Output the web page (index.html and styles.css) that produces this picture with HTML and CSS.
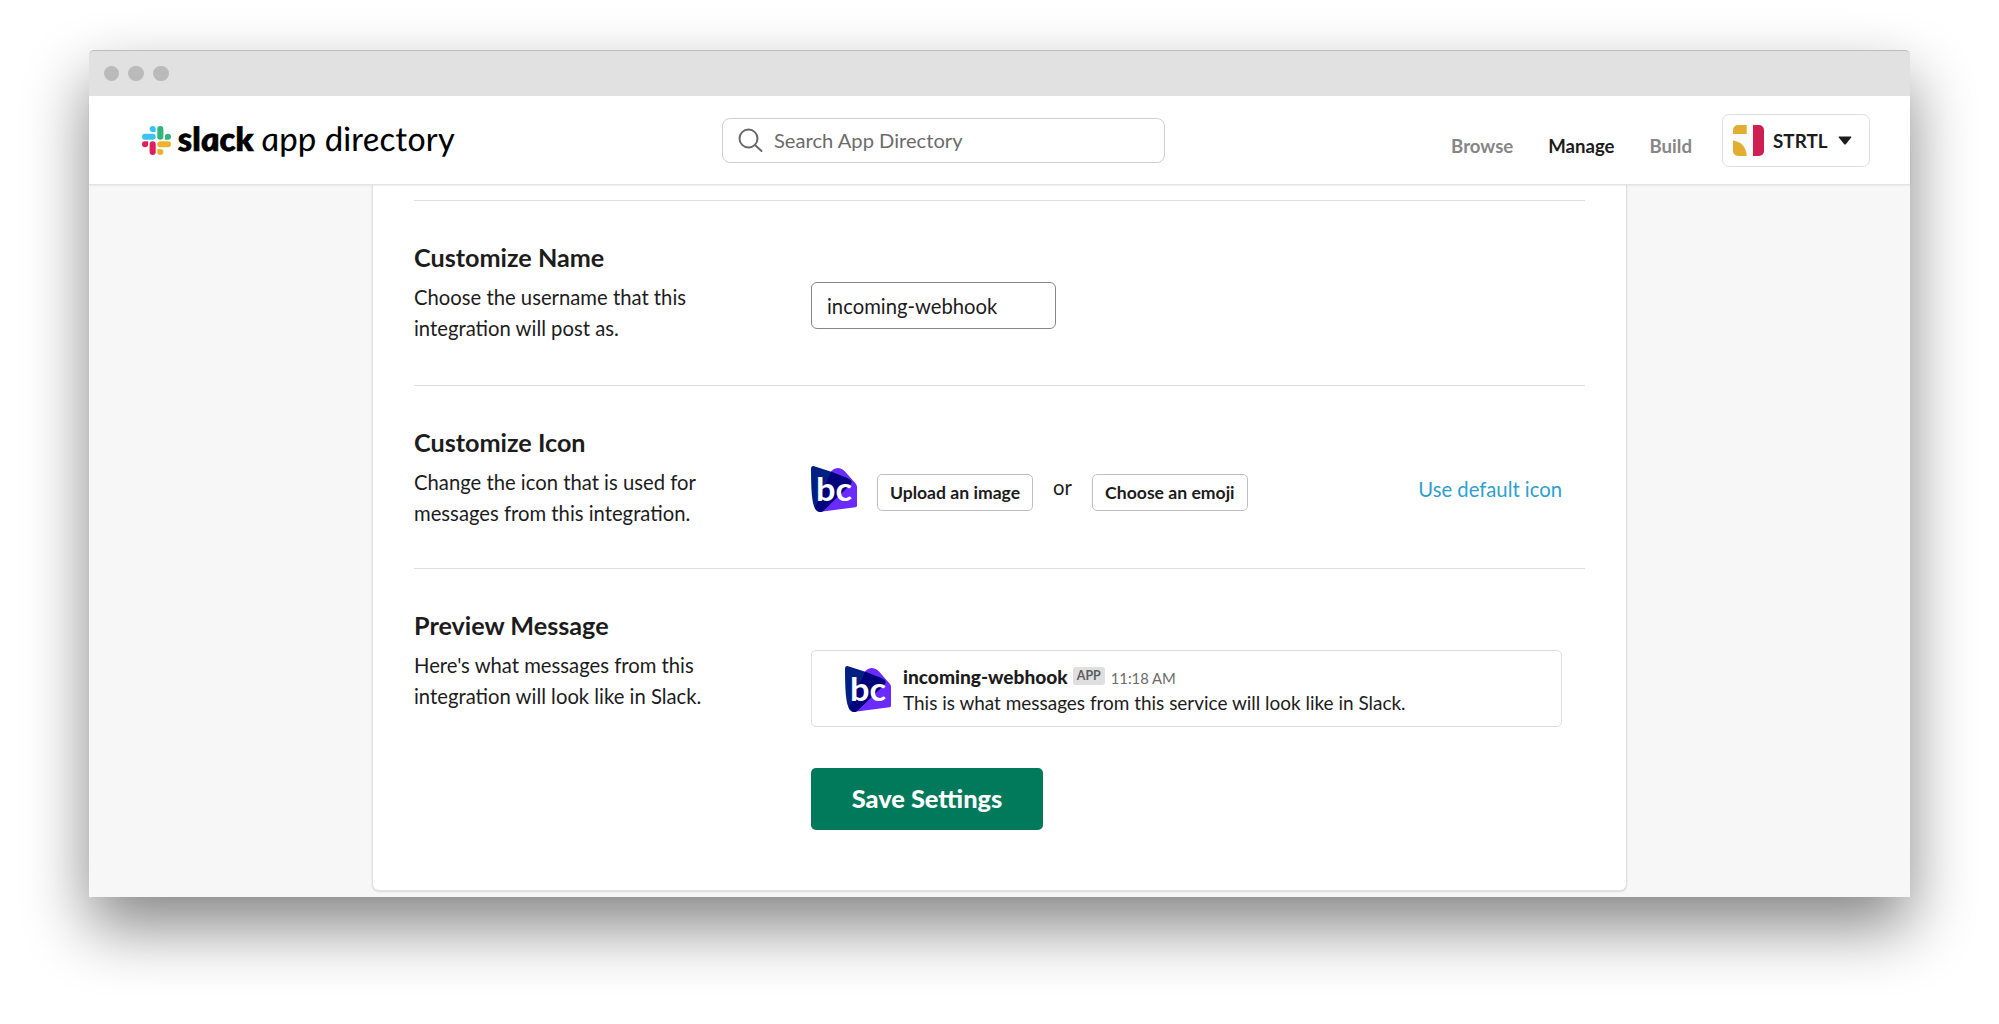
FILE: index.html
```html
<!DOCTYPE html>
<html lang="en">
<head>
<meta charset="utf-8">
<title>Incoming WebHooks | Slack App Directory</title>
<link rel="stylesheet" href="styles.css">
</head>
<body>
<div class="window">
  <div class="titlebar"><i class="dot"></i><i class="dot"></i><i class="dot"></i></div>
  <header class="header">
    <a class="brand" aria-label="slack app directory">
      <svg class="brand-mark" viewBox="0 0 122.800 122.800">
        <path fill="#e01e5a" d="M25.800 77.600a12.900 12.900 0 1 1-12.900-12.900h12.900zM32.300 77.600a12.900 12.900 0 0 1 25.800 0v32.300a12.900 12.900 0 0 1-25.800 0z"/>
        <path fill="#36c5f0" d="M45.200 25.800a12.900 12.900 0 1 1 12.900-12.900v12.900zM45.200 32.300a12.900 12.900 0 0 1 0 25.800H12.900a12.900 12.900 0 0 1 0-25.800z"/>
        <path fill="#2eb67d" d="M97 45.200a12.900 12.900 0 1 1 12.900 12.900H97zM90.500 45.200a12.900 12.900 0 0 1-25.800 0V12.900a12.900 12.900 0 0 1 25.800 0z"/>
        <path fill="#ecb22e" d="M77.600 97a12.900 12.900 0 1 1-12.900 12.900V97zM77.600 90.500a12.900 12.900 0 0 1 0-25.800h32.300a12.900 12.900 0 0 1 0 25.800z"/>
      </svg>
      <svg class="wordmark" width="290" height="48" viewBox="0 0 290 48">
        <g transform="translate(0 34) skewX(7.500)">
          <text class="word-bold" x="0" y="0" textLength="76" lengthAdjust="spacingAndGlyphs">slack</text>
          <text class="word-light" x="83.500" y="0" textLength="193.500" lengthAdjust="spacingAndGlyphs">app directory</text>
        </g>
      </svg>
    </a>
    <div class="search">
      <svg class="search-icon" width="25" height="25" viewBox="0 0 25 25"><circle cx="10.500" cy="10.500" r="9"/><path d="M17 17l6.500 6"/></svg>
      <span>Search App Directory</span>
    </div>
    <nav class="nav">
      <a class="link">Browse</a>
      <a class="link current">Manage</a>
      <a class="link">Build</a>
      <div class="team">
        <svg width="31" height="31" viewBox="0 0 31 31">
          <rect width="31" height="31" rx="5" fill="#fafafa"/>
          <path fill="#e3ad31" d="M0 9V5a5 5 0 0 1 5-5h8.700v9zM0 15.500Q13 17.500 13.700 31H5a5 5 0 0 1-5-5z"/>
          <path fill="#cf1f52" d="M20 0h6a5 5 0 0 1 5 5v21a5 5 0 0 1-5 5h-6z"/>
        </svg>
        <span class="team-name">STRTL</span>
        <svg width="14" height="9" viewBox="0 0 14 9"><path fill="#1d1c1d" d="M1.200.5h11.600q1 0 .4 1L8 7.900q-1 1-2 0L.8 1.500q-.6-1 .4-1z"/></svg>
      </div>
    </nav>
  </header>
  <main class="page">
    <div class="card">
      <section class="row">
        <div class="about">
          <h2>Customize Name</h2>
          <p>Choose the username that this<br>integration will post as.</p>
        </div>
        <div class="control"><div class="input">incoming-webhook</div></div>
      </section>
      <section class="row">
        <div class="about">
          <h2>Customize Icon</h2>
          <p>Change the icon that is used for<br>messages from this integration.</p>
        </div>
        <div class="control icon-control">
          <svg class="avatar" viewBox="0 0 46 46">
            <path fill="#6b2bff" d="M18 8 Q22 2 26.500 2 Q31 2 34 5.500 L45 18 Q46 19.500 46 21 V39.500 Q46 41 44.500 41.200 L8 46 Z"/>
            <path fill="#001f82" d="M0 3 Q0 -.8 4 .4 L21 6 L36 12 Q43 15 39 19 L12 45 Q9.500 46.500 7 45.500 Q3 44 1.500 34 Q0 25 0 3 Z"/>
            <path fill="#00007c" d="M20 5.700 L36 12 Q43 15 39 19 L12 45 Q9.500 46.500 7 45.500 Q5 44.500 4 42 Z"/>
            <text class="bc-text" x="5" y="35" textLength="36" lengthAdjust="spacingAndGlyphs">bc</text>
          </svg>
          <button class="btn">Upload an image</button>
          <span class="or">or</span>
          <button class="btn">Choose an emoji</button>
          <a class="default-link">Use default icon</a>
        </div>
      </section>
      <section class="row">
        <div class="about">
          <h2>Preview Message</h2>
          <p>Here's what messages from this<br>integration will look like in Slack.</p>
        </div>
        <div class="control">
          <div class="preview">
            <svg class="avatar" viewBox="0 0 46 46">
              <path fill="#6b2bff" d="M18 8 Q22 2 26.500 2 Q31 2 34 5.500 L45 18 Q46 19.500 46 21 V39.500 Q46 41 44.500 41.200 L8 46 Z"/>
              <path fill="#001f82" d="M0 3 Q0 -.8 4 .4 L21 6 L36 12 Q43 15 39 19 L12 45 Q9.500 46.500 7 45.500 Q3 44 1.500 34 Q0 25 0 3 Z"/>
              <path fill="#00007c" d="M20 5.700 L36 12 Q43 15 39 19 L12 45 Q9.500 46.500 7 45.500 Q5 44.500 4 42 Z"/>
              <text class="bc-text" x="5" y="35" textLength="36" lengthAdjust="spacingAndGlyphs">bc</text>
            </svg>
            <div class="message">
              <div class="meta"><b>incoming-webhook</b><span class="badge">APP</span><span class="time">11:18 AM</span></div>
              <div class="text">This is what messages from this service will look like in Slack.</div>
            </div>
          </div>
          <button class="save">Save Settings</button>
        </div>
      </section>
    </div>
  </main>
</div>
</body>
</html>
```
FILE: styles.css
```css
* { box-sizing: border-box; }
body {
  margin: 0;
  height: 1024px;
  padding: 50px 89px 0;
  overflow: hidden;
  background: #fff;
  color: #1d1c1d;
  font-family: Lato, sans-serif;
  font-size: 20.25px;
}
.window {
  height: 847px;
  display: flex;
  flex-direction: column;
  border-radius: 5px 5px 0 0;
  box-shadow: 0 30px 64px rgba(0, 0, 0, .48);
}
.titlebar {
  flex: none;
  height: 46px;
  display: flex;
  align-items: center;
  gap: 9.250px;
  padding-left: 14.500px;
  background: #e1e1e1;
  border-top: 1px solid #bcbebc;
  border-radius: 5px 5px 0 0;
}
.dot { width: 15.500px; height: 15.500px; border-radius: 50%; background: #bababa; }
.header {
  position: relative;
  flex: none;
  height: 89px;
  display: grid;
  grid-template-columns: 633px 443px 1fr;
  align-items: center;
  background: #fff;
  border-bottom: 1px solid #e4e4e4;
  box-shadow: 0 1px 1px rgba(0, 0, 0, .05);
}
.brand { display: flex; align-items: center; padding-left: 53px; }
.brand-mark { width: 29px; height: 29px; }
.wordmark { margin: 1px 0 0 7.500px; overflow: visible; }
.word-bold { font: italic 900 33px Lato, sans-serif; stroke: #000; stroke-width: .7px; }
.word-light { font: italic 400 33.500px Lato, sans-serif; }
.search {
  height: 45px;
  display: flex;
  align-items: center;
  gap: 11.500px;
  padding-left: 14.500px;
  border: 1px solid #cfcfcf;
  border-radius: 8px;
  color: #6b6b6b;
  font-size: 20.150px;
}
.search-icon { fill: none; stroke: #696969; stroke-width: 2px; stroke-linecap: round; }
.nav { display: flex; align-items: center; justify-content: flex-end; padding-right: 40px; }
.link { margin-right: 35px; padding-top: 11px; color: #868686; font-size: 18.600px; font-weight: 700; }
.link.current { color: #1d1c1d; }
.team {
  width: 148px;
  height: 53px;
  margin-left: -5px;
  display: flex;
  align-items: center;
  padding-left: 10px;
  border: 1px solid #dedede;
  border-radius: 7px;
}
.team-name { margin: 0 10.500px 0 9px; font-size: 18.850px; font-weight: 700; }
.page { flex: 1; min-height: 0; padding: 0 283px; background: #f7f7f7; overflow: hidden; }
.card {
  height: 706px;
  padding: 15px 41px 0;
  background: #fff;
  border: 1px solid #e0e0e0;
  border-top: 0;
  border-radius: 0 0 7px 7px;
  box-shadow: 0 1px 2px rgba(0, 0, 0, .12);
}
.row {
  display: grid;
  grid-template-columns: 397px 1fr;
  height: 183px;
  border-top: 1px solid #dedede;
}
.row:first-child { height: 185px; }
.row:last-child { height: 300px; }
.about { padding-top: 36px; }
h2 { margin: 0 0 4.600px; font-size: 25.200px; font-weight: 700; line-height: 40.400px; }
p { margin: 0; line-height: 30.500px; }
.control { padding-top: 81px; }
.input {
  width: 245px;
  height: 47px;
  padding-left: 15px;
  border: 1px solid #868686;
  border-radius: 6px;
  line-height: 46px;
}
.icon-control { display: flex; align-items: flex-start; padding: 80px 23px 0 0; }
.avatar { flex: none; width: 46px; height: 46px; }
.bc-text { font: 700 33px Lato, sans-serif; fill: #fff; }
.btn {
  width: 156px;
  height: 37px;
  margin-top: 8px;
  padding: 0;
  background: #fff;
  border: 1px solid #bfbfbf;
  border-radius: 5px;
  color: #1d1c1d;
  font: 700 17.600px Lato, sans-serif;
}
.avatar + .btn { margin-left: 20px; }
.or { margin: 9px 20px 0; line-height: 24px; }
.default-link { margin: 9px 0 0 auto; line-height: 28px; color: #2e9fd0; }
.preview {
  width: 751px;
  height: 77px;
  display: flex;
  padding: 15px 0 0 33px;
  border: 1px solid #dedede;
  border-radius: 5px;
}
.message { margin-left: 12px; }
.meta { display: flex; height: 24px; align-items: baseline; font-size: 19.100px; line-height: 22px; }
.meta b { font-weight: 900; }
.badge {
  align-self: flex-start;
  margin: 1px 6px 0 5px;
  padding: 0 4px;
  height: 18px;
  background: #dfdfdf;
  border-radius: 3px;
  color: #5c5c5c;
  font-size: 12.400px;
  font-weight: 700;
  line-height: 18px;
}
.time { color: #6b6b6b; font-size: 14.800px; }
.text { font-size: 18.950px; line-height: 25px; }
.save {
  display: block;
  width: 232px;
  height: 62px;
  margin-top: 41px;
  padding: 0 0 2px;
  background: #007a5a;
  border: 0;
  border-radius: 5px;
  color: #fff;
  font: 900 25.400px Lato, sans-serif;
}
```
